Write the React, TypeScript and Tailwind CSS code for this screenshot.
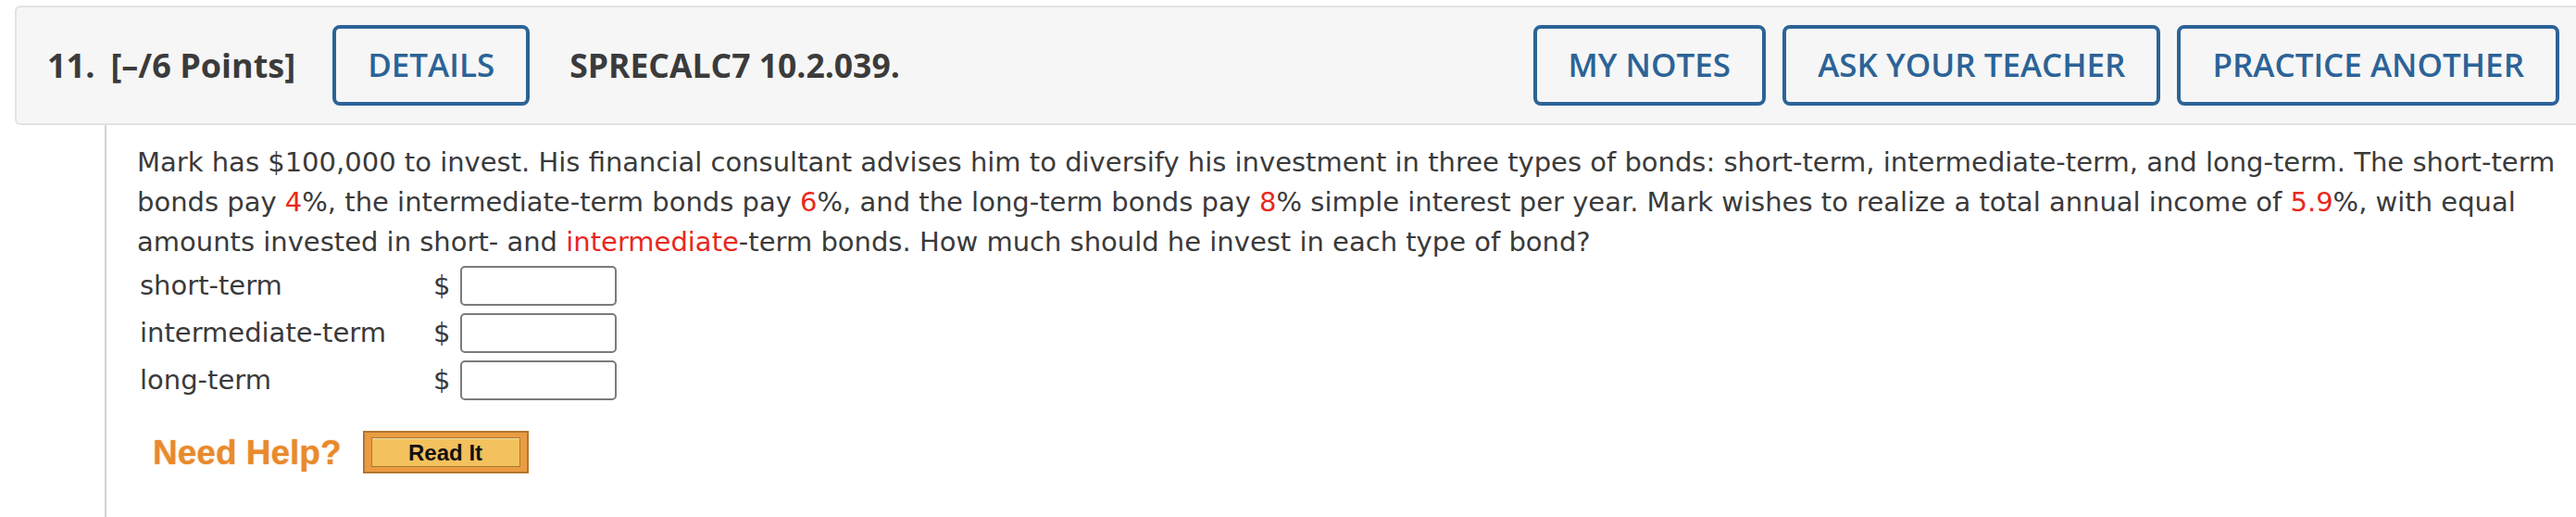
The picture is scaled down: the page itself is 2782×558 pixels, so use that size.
import React from "react";

const HeaderButton = ({ label }: { label: string }) => (
  <button className="flex h-[87px] shrink-0 items-center rounded-[8px] border-4 border-[#2c6397] bg-transparent px-[34px] text-[35px] font-semibold text-[#2c6397]">
    {label}
  </button>
);

const AnswerRow = ({ label }: { label: string }) => (
  <div className="flex h-[51px] items-center">
    <span className="w-[320px] pl-[3px]">{label}</span>
    <span className="w-[29px]">$</span>
    <input
      type="text"
      className="h-[43px] w-[169px] rounded-[5px] border-2 border-[#7b7b7b] bg-white px-2 outline-none"
    />
  </div>
);

const Red = ({ children }: { children: React.ReactNode }) => (
  <span className="text-[#e8281d]">{children}</span>
);

export default function App() {
  return (
    <div className="flex h-[558px] w-[2782px] flex-col overflow-hidden bg-white pl-[16px] pt-[6px]">
      {/* question header */}
      <div className="flex h-[129px] shrink-0 items-center rounded-l-[6px] border-2 border-r-0 border-[#e2e2e2] bg-[#f6f6f6] pl-[33px] pr-[18px] font-['Open_Sans',sans-serif] text-[#3b3b3b]">
        <span className="text-[36px] font-bold">11.</span>
        <span className="ml-[17px] text-[36px] font-bold">[–/6 Points]</span>
        <div className="ml-[40px]">
          <HeaderButton label="DETAILS" />
        </div>
        <span className="ml-[43px] text-[35.5px] font-bold">SPRECALC7 10.2.039.</span>
        <div className="ml-auto flex gap-[18px]">
          <HeaderButton label="MY NOTES" />
          <HeaderButton label="ASK YOUR TEACHER" />
          <HeaderButton label="PRACTICE ANOTHER" />
        </div>
      </div>

      {/* question body */}
      <div className="ml-[97px] flex-1 border-l-2 border-[#d3d3d3] pl-[33px] pt-[19px] font-['DejaVu_Sans',sans-serif] text-[29px] leading-[43px] text-[#3a3a3a]">
        <div className="whitespace-nowrap">
          <div>
            Mark has $100,000 to invest. His financial consultant advises him to diversify his investment in three
            types of bonds: short-term, intermediate-term, and long-term. The short-term
          </div>
          <div>
            bonds pay <Red>4</Red>%, the intermediate-term bonds pay <Red>6</Red>%, and the long-term bonds pay{" "}
            <Red>8</Red>% simple interest per year. Mark wishes to realize a total annual income of <Red>5.9</Red>%,
            with equal
          </div>
          <div>
            amounts invested in short- and <Red>intermediate</Red>-term bonds. How much should he invest in each
            type of bond?
          </div>
        </div>

        <div>
          <AnswerRow label="short-term" />
          <AnswerRow label="intermediate-term" />
          <AnswerRow label="long-term" />
        </div>

        <div className="mt-[29px] flex items-center pl-[17px]">
          <span className="font-['Liberation_Sans',Arial,sans-serif] text-[37px] font-bold leading-none text-[#e88a2c] [text-shadow:0_0_2px_rgba(232,138,44,0.55)]">
            Need Help?
          </span>
          <button className="ml-[23px] h-[46px] w-[179px] border-2 border-[#b3762f] bg-[#eb9c42] px-[7px] py-[5px]">
            <span className="flex h-full w-full items-center justify-center border border-[#a67a33] bg-[#f3c15d] font-['Liberation_Sans',Arial,sans-serif] text-[24px] font-bold text-[#111] shadow-[inset_0_1px_0_rgba(255,255,255,0.45)]">
              Read It
            </span>
          </button>
        </div>
      </div>
    </div>
  );
}
